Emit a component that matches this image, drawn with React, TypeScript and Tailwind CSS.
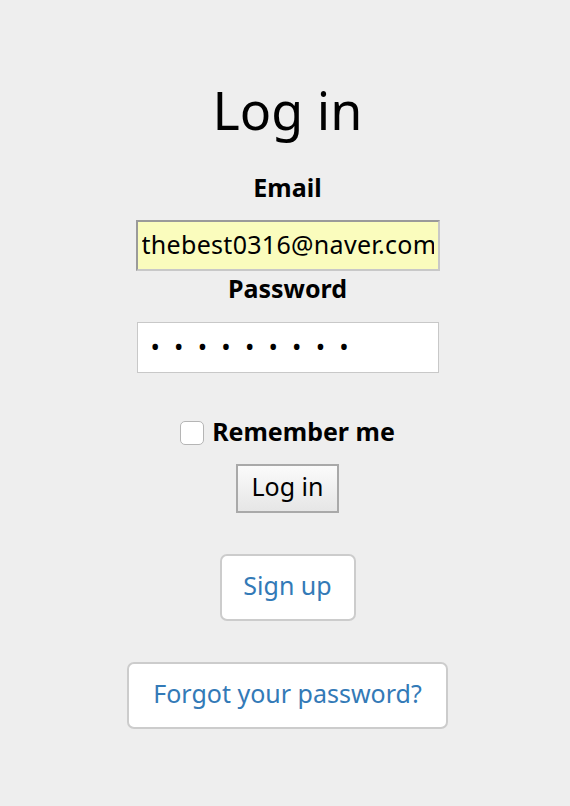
export default function App() {
  return (
    <div
      className="min-h-[806px] bg-[#eeeeee] flex flex-col items-center pl-[5px] text-black"
      style={{ fontFamily: '"Noto Sans", "Open Sans", sans-serif' }}
    >
      <h1 className="mt-[78px] text-[52px] leading-[64px] font-normal">Log in</h1>

      <form className="flex flex-col items-center" onSubmit={(e) => e.preventDefault()}>
        <label className="mt-[28px] text-[25px] leading-[34px] font-bold">Email</label>
        <input
          type="email"
          defaultValue="thebest0316@naver.com"
          className="mt-[16px] w-[304px] h-[51px] px-[4px] pb-[3px] bg-[#fafcbd] text-[25px] tracking-[0.3px] border-2 border-[#9a9a9a] border-b-[#c8c8c8] border-r-[#c8c8c8] outline-none"
        />
        <label className="mt-[1px] pb-[2px] text-[25px] leading-[32px] font-bold">Password</label>
        <input
          type="password"
          defaultValue="123456789"
          className="mt-[16px] w-[302px] h-[51px] pl-[13px] pb-[3px] bg-white text-[25px] tracking-[14.2px] border border-[#c8c8c8] outline-none"
        />

        <div className="mt-[45px] h-[30px] flex items-center gap-[8px]">
          <span className="w-[24px] h-[24px] rounded-[5px] border border-[#b5b5b5] bg-white" />
          <span className="text-[25px] leading-[30px] font-bold pb-[4px]">Remember me</span>
        </div>

        <button
          type="submit"
          className="mt-[16px] w-[103px] h-[49px] pb-[4px] text-[25px] border-2 border-[#a9a9a9] bg-gradient-to-b from-[#fbfbfb] to-[#e6e6e6]"
        >
          Log in
        </button>
      </form>

      <a className="mt-[41px] w-[136px] h-[67px] pb-[4px] flex items-center justify-center bg-white border-2 border-[#cccccc] rounded-[7px] text-[25px] text-[#337ab7]">
        Sign up
      </a>
      <a className="mt-[41px] w-[321px] h-[67px] pb-[4px] flex items-center justify-center bg-white border-2 border-[#cccccc] rounded-[7px] text-[25px] text-[#337ab7]">
        Forgot your password?
      </a>
    </div>
  );
}
